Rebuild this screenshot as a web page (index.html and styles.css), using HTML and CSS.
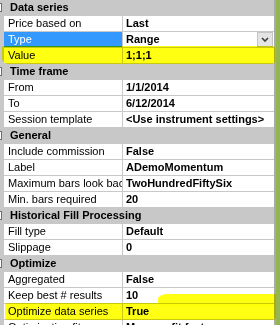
FILE: index.html
```html
<!DOCTYPE html>
<html lang="en">
<head>
    <meta charset="UTF-8">
    <title>Strategy properties</title>
    <link rel="stylesheet" href="styles.css">
</head>
<body>
    <div class="screen">
        <div class="grid">
            <div class="cat"><span class="toggle"></span>Data series</div>
            <div class="row"><div class="name">Price based on</div><div class="val">Last</div></div>
            <div class="row selected">
                <div class="name">Type</div>
                <div class="val">Range
                    <span class="drop">
                        <svg width="8" height="5" viewBox="0 0 8 5"><path d="M1 1 L4 4 L7 1" fill="none" stroke="#3c3c3c" stroke-width="1.6"/></svg>
                    </span>
                </div>
            </div>
            <div class="row"><div class="name">Value</div><div class="val">1;1;1</div></div>

            <div class="cat"><span class="toggle"></span>Time frame</div>
            <div class="row"><div class="name">From</div><div class="val">1/1/2014</div></div>
            <div class="row"><div class="name">To</div><div class="val">6/12/2014</div></div>
            <div class="row"><div class="name">Session template</div><div class="val">&lt;Use instrument settings&gt;</div></div>

            <div class="cat"><span class="toggle"></span>General</div>
            <div class="row"><div class="name">Include commission</div><div class="val">False</div></div>
            <div class="row"><div class="name">Label</div><div class="val">ADemoMomentum</div></div>
            <div class="row"><div class="name">Maximum bars look back</div><div class="val">TwoHundredFiftySix</div></div>
            <div class="row"><div class="name">Min. bars required</div><div class="val">20</div></div>

            <div class="cat"><span class="toggle"></span>Historical Fill Processing</div>
            <div class="row"><div class="name">Fill type</div><div class="val">Default</div></div>
            <div class="row"><div class="name">Slippage</div><div class="val">0</div></div>

            <div class="cat"><span class="toggle"></span>Optimize</div>
            <div class="row"><div class="name">Aggregated</div><div class="val">False</div></div>
            <div class="row"><div class="name">Keep best # results</div><div class="val">10</div></div>
            <div class="row"><div class="name">Optimize data series</div><div class="val">True</div></div>
            <div class="row"><div class="name">Optimization fitness</div><div class="val">Max. profit factor</div></div>
        </div>
        <div class="edge"></div>

        <!-- highlighter strokes drawn over the grid -->
        <div class="mark mark-value"></div>
        <div class="mark mark-streak"></div>
        <div class="mark mark-optimize"></div>
    </div>
</body>
</html>
```

FILE: styles.css
```css
body {
    margin: 0;
    font-family: "Liberation Sans", Arial, sans-serif;
    font-size: 11px;
    color: #000;
    background-color: #fff;
}
.screen {
    position: relative;
    display: flex;
    width: 280px;
    height: 325px;
    overflow: hidden;
}
.grid {
    width: 274px;
    background-color: #c8c8c8;
}
.edge {
    width: 4px;
    border-left: 2px solid #aaaaaa;
    background-color: #93b653;
}
.cat {
    display: flex;
    align-items: center;
    height: 15px;
    border-bottom: 1px solid #c8c8c8;
    background-color: #c8c8c8;
    font-weight: bold;
    line-height: 15px;
    white-space: nowrap;
}
.toggle {
    width: 7px;
    height: 7px;
    margin-left: -7px;
    margin-right: 8px;
    border: 1px solid #6e6e6e;
    background-color: #fff;
}
.row {
    display: flex;
    height: 16px;
    padding-left: 4px;
    line-height: 15px;
    white-space: nowrap;
}
.name {
    width: 114px;
    padding-left: 4px;
    overflow: hidden;
    background-color: #fff;
    border-right: 1px solid #c8c8c8;
    border-bottom: 1px solid #c8c8c8;
}
.val {
    display: flex;
    justify-content: space-between;
    flex: 1;
    padding-left: 3px;
    overflow: hidden;
    background-color: #fff;
    border-bottom: 1px solid #c8c8c8;
    font-weight: bold;
}
.selected .name {
    background-color: #3399ff;
    color: #fff;
}
.drop {
    display: flex;
    align-items: center;
    justify-content: center;
    width: 14px;
    height: 13px;
    margin-right: 1px;
    border: 1px solid #c4c4c4;
    background-color: #e4e4e4;
}
.mark {
    position: absolute;
    background-color: #ffff12;
    mix-blend-mode: multiply;
}
.mark-value {
    left: 2px;
    top: 46px;
    width: 273px;
    height: 18px;
    border-radius: 2px 2px 3px 6px;
}
.mark-streak {
    left: 158px;
    top: 294px;
    width: 118px;
    height: 11px;
    border-radius: 10px 0 0 2px / 5px 0 0 2px;
}
.mark-optimize {
    left: 5px;
    top: 303px;
    width: 271px;
    height: 17px;
    border-radius: 3px 0 4px 3px;
}
```
